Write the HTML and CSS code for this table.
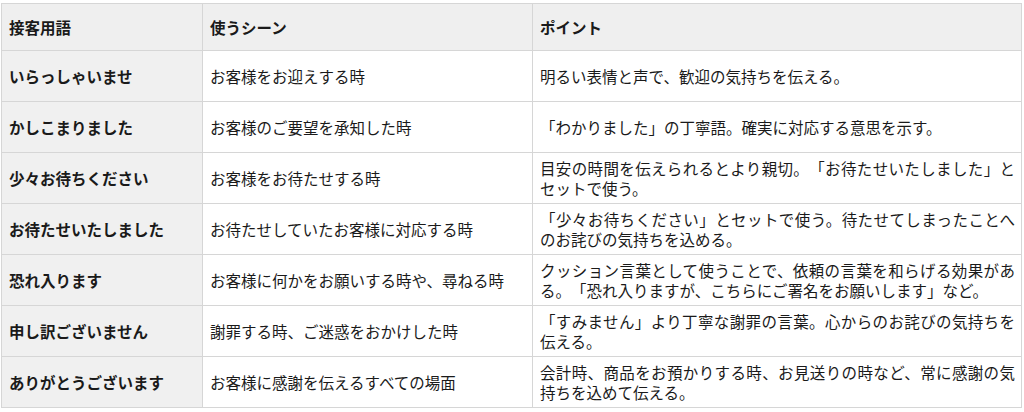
FILE: index.html
```html
<!DOCTYPE html>
<html lang="ja">
<head>
<meta charset="utf-8">
<title>接客用語</title>
<link rel="stylesheet" href="styles.css">
</head>
<body>
<div class="wrap">
<table class="phrases">
  <colgroup>
    <col class="c-term">
    <col class="c-scene">
    <col class="c-point">
  </colgroup>
  <thead>
    <tr><th>接客用語</th><th>使うシーン</th><th>ポイント</th></tr>
  </thead>
  <tbody>
    <tr><th>いらっしゃいませ</th><td>お客様をお迎えする時</td><td>明るい表情と声で、歓迎の気持ちを伝える。</td></tr>
    <tr><th>かしこまりました</th><td>お客様のご要望を承知した時</td><td>「わかりました」の丁寧語。確実に対応する意思を示す。</td></tr>
    <tr><th>少々お待ちください</th><td>お客様をお待たせする時</td><td>目安の時間を伝えられるとより親切。「お待たせいたしました」とセットで使う。</td></tr>
    <tr><th>お待たせいたしました</th><td>お待たせしていたお客様に対応する時</td><td>「少々お待ちください」とセットで使う。待たせてしまったことへのお詫びの気持ちを込める。</td></tr>
    <tr><th>恐れ入ります</th><td>お客様に何かをお願いする時や、尋ねる時</td><td>クッション言葉として使うことで、依頼の言葉を和らげる効果がある。「恐れ入りますが、こちらにご署名をお願いします」など。</td></tr>
    <tr><th>申し訳ございません</th><td>謝罪する時、ご迷惑をおかけした時</td><td>「すみません」より丁寧な謝罪の言葉。心からのお詫びの気持ちを伝える。</td></tr>
    <tr><th>ありがとうございます</th><td>お客様に感謝を伝えるすべての場面</td><td>会計時、商品をお預かりする時、お見送りの時など、常に感謝の気持ちを込めて伝える。</td></tr>
  </tbody>
</table>
</div>
</body>
</html>
```

FILE: styles.css
```css
html, body {
  margin: 0;
  padding: 0;
  background: #ffffff;
}
body {
  font-family: "Noto Sans CJK JP", "Noto Sans", sans-serif;
  color: #1a1a1a;
}
.wrap {
  padding: 3px 3px 0 1px;
}
.phrases {
  width: 1020px;
  border-collapse: collapse;
  table-layout: fixed;
  font-size: 15.5px;
  line-height: 20px;
  text-spacing-trim: space-all;
}
.c-term { width: 201px; }
.c-scene { width: 330px; }
.c-point { width: 489px; }
.phrases th,
.phrases td {
  border: 1px solid #d6d6d6;
  padding: 5px 6px 5px 7px;
  height: 40px;
  vertical-align: middle;
  text-align: left;
}
.phrases td {
  text-align: justify;
  font-weight: 400;
  line-break: strict;
}
.phrases thead th {
  background: #efefef;
  font-weight: 700;
  height: 36px;
}
.phrases tbody th {
  background: #f0f0f0;
  font-weight: 700;
}
```
